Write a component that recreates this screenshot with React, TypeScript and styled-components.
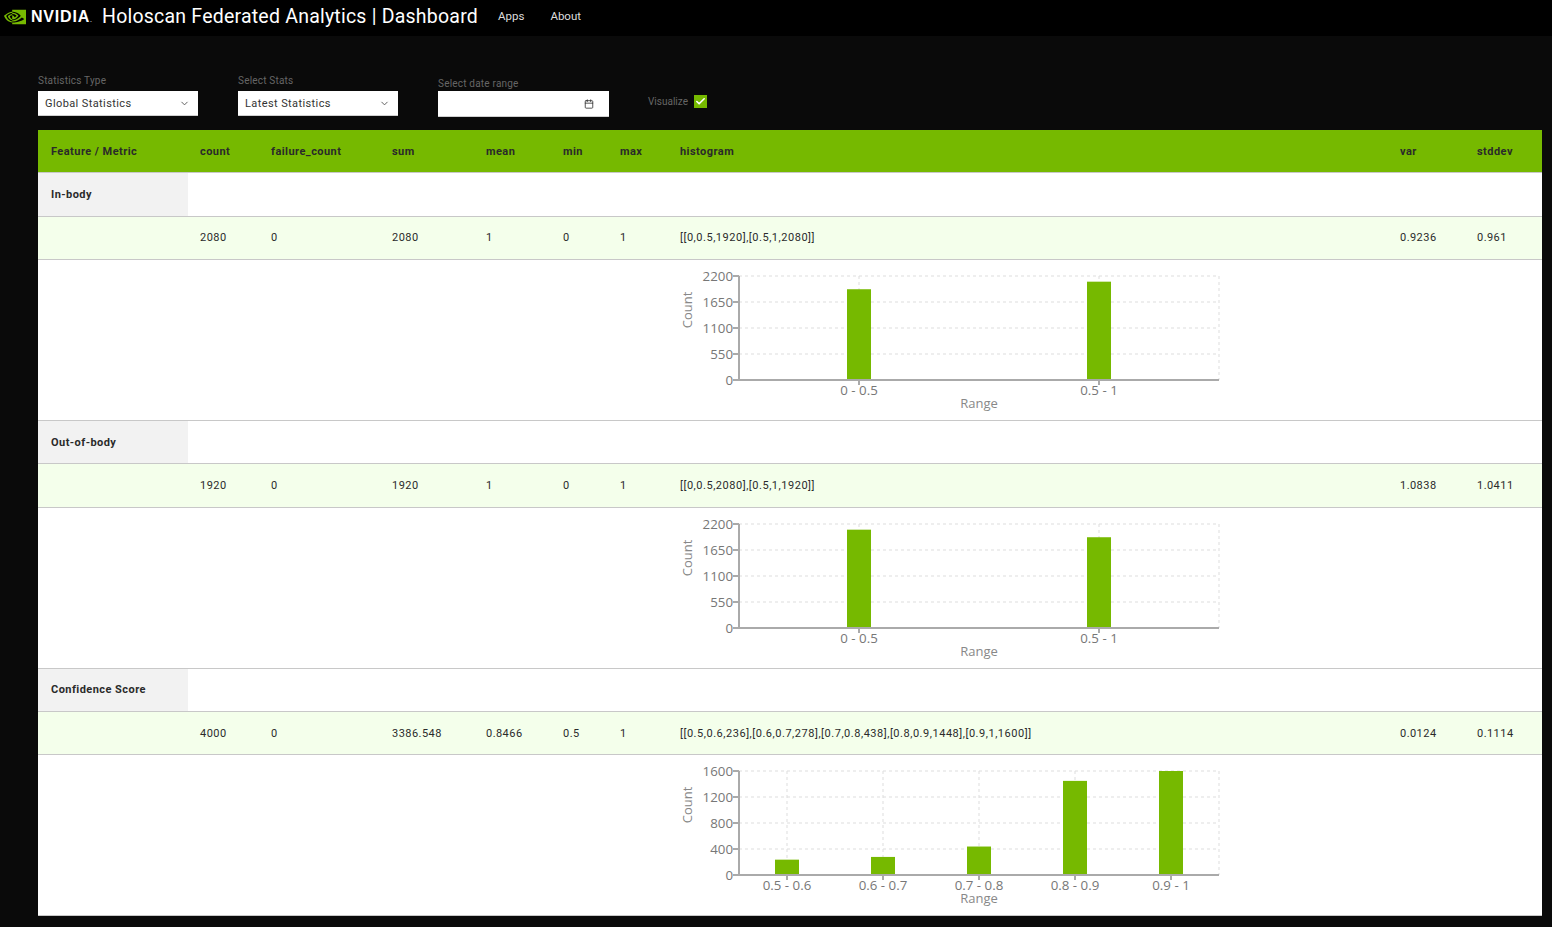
import React from "react";
import styled, { createGlobalStyle } from "styled-components";
import { SiNvidia } from "react-icons/si";
import { Calendar, Check, ChevronDown } from "lucide-react";

const GREEN = "#76b900";
const COLUMNS = "150px 71px 121px 94px 77px 57px 60px 720px 77px 77px";

interface Bin {
  label: string;
  value: number;
}

interface Feature {
  name: string;
  values: string[];
  ticks: number[];
  bins: Bin[];
}

const metrics = ["count", "failure_count", "sum", "mean", "min", "max", "histogram", "var", "stddev"];

const features: Feature[] = [
  {
    name: "In-body",
    values: ["2080", "0", "2080", "1", "0", "1", "[[0,0.5,1920],[0.5,1,2080]]", "0.9236", "0.961"],
    ticks: [0, 550, 1100, 1650, 2200],
    bins: [
      { label: "0 - 0.5", value: 1920 },
      { label: "0.5 - 1", value: 2080 },
    ],
  },
  {
    name: "Out-of-body",
    values: ["1920", "0", "1920", "1", "0", "1", "[[0,0.5,2080],[0.5,1,1920]]", "1.0838", "1.0411"],
    ticks: [0, 550, 1100, 1650, 2200],
    bins: [
      { label: "0 - 0.5", value: 2080 },
      { label: "0.5 - 1", value: 1920 },
    ],
  },
  {
    name: "Confidence Score",
    values: [
      "4000",
      "0",
      "3386.548",
      "0.8466",
      "0.5",
      "1",
      "[[0.5,0.6,236],[0.6,0.7,278],[0.7,0.8,438],[0.8,0.9,1448],[0.9,1,1600]]",
      "0.0124",
      "0.1114",
    ],
    ticks: [0, 400, 800, 1200, 1600],
    bins: [
      { label: "0.5 - 0.6", value: 236 },
      { label: "0.6 - 0.7", value: 278 },
      { label: "0.7 - 0.8", value: 438 },
      { label: "0.8 - 0.9", value: 1448 },
      { label: "0.9 - 1", value: 1600 },
    ],
  },
];

const Histogram = ({ ticks, bins }: { ticks: number[]; bins: Bin[] }) => {
  const left = 71;
  const right = 551;
  const top = 16;
  const bottom = 120;
  const max = ticks[ticks.length - 1];
  const band = (right - left) / bins.length;
  const yOf = (v: number) => bottom - (v / max) * (bottom - top);

  return (
    <ChartSvg width={720} height={160} viewBox="0 0 720 160">
      {ticks.map((t) => (
        <g key={t}>
          {t > 0 && <GridLine x1={left} x2={right} y1={yOf(t)} y2={yOf(t)} />}
          <AxisLine x1={left - 6} x2={left} y1={yOf(t)} y2={yOf(t)} />
          <AxisText x={left - 6} y={yOf(t) + 5} textAnchor="end">
            {t}
          </AxisText>
        </g>
      ))}
      <GridLine x1={right} x2={right} y1={top} y2={bottom} />
      {bins.map((b, i) => {
        const cx = left + band * (i + 0.5);
        return (
          <g key={b.label}>
            <GridLine x1={cx} x2={cx} y1={top} y2={bottom} />
            <rect x={cx - 12} y={yOf(b.value)} width={24} height={bottom - yOf(b.value)} fill={GREEN} />
            <AxisLine x1={cx} x2={cx} y1={bottom} y2={bottom + 5} />
            <AxisText x={cx} y={135} textAnchor="middle">
              {b.label}
            </AxisText>
          </g>
        );
      })}
      <AxisLine x1={left} x2={left} y1={top} y2={bottom} />
      <AxisLine x1={left} x2={right} y1={bottom} y2={bottom} />
      <TitleText x={(left + right) / 2} y={148} textAnchor="middle">
        Range
      </TitleText>
      <TitleText x={0} y={0} textAnchor="middle" transform="translate(24 50) rotate(-90)">
        Count
      </TitleText>
    </ChartSvg>
  );
};

export default function App() {
  return (
    <>
      <GlobalStyle />
      <Header>
        <LogoMark>
          <SiNvidia size={22} color={GREEN} />
          <LogoWord>
            NVIDIA<LogoDot>.</LogoDot>
          </LogoWord>
        </LogoMark>
        <Title>Holoscan Federated Analytics | Dashboard</Title>
        <NavLink>Apps</NavLink>
        <NavLink>About</NavLink>
      </Header>
      <Main>
        <Toolbar>
          <Field $width={160} $height={41} $gap={5}>
            <FieldLabel>Statistics Type</FieldLabel>
            <SelectBox>
              Global Statistics
              <ChevronDown size={11} color="#555" />
            </SelectBox>
          </Field>
          <Field $width={160} $height={41} $gap={5}>
            <FieldLabel>Select Stats</FieldLabel>
            <SelectBox>
              Latest Statistics
              <ChevronDown size={11} color="#555" />
            </SelectBox>
          </Field>
          <Field $width={171} $height={42} $gap={2}>
            <FieldLabel>Select date range</FieldLabel>
            <DateBox>
              <Calendar size={10} color="#333" />
            </DateBox>
          </Field>
          <Visualize>
            <VisualizeLabel>Visualize</VisualizeLabel>
            <CheckBox>
              <Check size={11} color="#fff" strokeWidth={3.5} />
            </CheckBox>
          </Visualize>
        </Toolbar>
        <Table>
          <HeadRow>
            <HeadCell>Feature / Metric</HeadCell>
            {metrics.map((m) => (
              <HeadCell key={m}>{m}</HeadCell>
            ))}
          </HeadRow>
          {features.map((f) => (
            <React.Fragment key={f.name}>
              <NameRow>
                <NameCell>{f.name}</NameCell>
              </NameRow>
              <DataRow>
                <Cell />
                {f.values.map((v, i) => (
                  <Cell key={metrics[i]} $wide={metrics[i] === "histogram"}>
                    {v}
                  </Cell>
                ))}
              </DataRow>
              <ChartRow>
                <ChartCell>
                  <Histogram ticks={f.ticks} bins={f.bins} />
                </ChartCell>
              </ChartRow>
            </React.Fragment>
          ))}
        </Table>
      </Main>
    </>
  );
}

const GlobalStyle = createGlobalStyle`
  html, body {
    margin: 0;
    height: 100%;
    background: #0a0a0a;
    font-family: Roboto, "Liberation Sans", sans-serif;
  }
  body {
    overflow: hidden;
  }
`;

const Header = styled.header`
  display: flex;
  align-items: center;
  height: 36px;
  padding: 0 0 3px 4px;
  background: #000;
  color: #fff;
  box-sizing: border-box;
`;

const LogoMark = styled.div`
  display: flex;
  align-items: center;
  gap: 5px;
  width: 98px;
`;

const LogoWord = styled.span`
  font-family: "Liberation Sans", sans-serif;
  font-size: 16px;
  font-weight: 700;
  letter-spacing: 0.8px;
`;

const LogoDot = styled.span`
  font-size: 7px;
  font-weight: 400;
  letter-spacing: 0;
`;

const Title = styled.h1`
  margin: 0 20px 0 0;
  font-size: 19.5px;
  font-weight: 400;
  letter-spacing: 0.22px;
  white-space: nowrap;
`;

const NavLink = styled.a`
  margin: 0 26px 1px 0;
  font-size: 11.5px;
  color: #ddd;
`;

const Main = styled.main`
  padding: 0 10px 0 38px;
`;

const Toolbar = styled.div`
  display: flex;
  align-items: flex-start;
  gap: 40px;
  height: 94px;
  padding-top: 39px;
  box-sizing: border-box;
`;

const Field = styled.div<{ $width: number; $height: number; $gap: number }>`
  display: flex;
  flex-direction: column;
  justify-content: flex-end;
  gap: ${({ $gap }) => $gap}px;
  width: ${({ $width }) => $width}px;
  height: ${({ $height }) => $height}px;
`;

const FieldLabel = styled.label`
  font-size: 10px;
  line-height: 11px;
  color: #666;
  letter-spacing: 0.2px;
`;

const VisualizeLabel = styled(FieldLabel)`
  letter-spacing: 0;
`;

const SelectBox = styled.div`
  display: flex;
  align-items: center;
  justify-content: space-between;
  height: 25px;
  padding: 0 8px 0 7px;
  background: #fff;
  border-bottom: 1px solid #d0d0d0;
  font-size: 11px;
  color: #333;
  letter-spacing: 0.4px;
  box-sizing: border-box;
`;

const DateBox = styled(SelectBox)`
  justify-content: flex-end;
  height: 26px;
  padding-right: 15px;
`;

const Visualize = styled.div`
  display: flex;
  align-items: center;
  gap: 6px;
  height: 26px;
  margin: 13px 0 0 -1px;
`;

const CheckBox = styled.span`
  display: flex;
  align-items: center;
  justify-content: center;
  width: 13px;
  height: 13px;
  background: ${GREEN};
`;

const Table = styled.div`
  width: 1504px;
  background: #fff;
`;

const Row = styled.div`
  display: grid;
  grid-template-columns: ${COLUMNS};
  border-bottom: 1px solid #c8c8c8;
  box-sizing: border-box;
`;

const HeadRow = styled(Row)`
  height: 43.2px;
  background: ${GREEN};
`;

const HeadCell = styled.div`
  display: flex;
  align-items: center;
  padding-left: 12px;
  font-size: 11px;
  font-weight: 700;
  color: #2a2a2a;
  letter-spacing: 0.45px;
  white-space: nowrap;

  &:first-child {
    padding-left: 13px;
  }
`;

const NameRow = styled(Row)`
  height: 43.5px;
`;

const NameCell = styled.div`
  display: flex;
  align-items: center;
  padding-left: 13px;
  background: #f2f2f2;
  font-size: 11px;
  font-weight: 700;
  color: #2a2a2a;
  letter-spacing: 0.45px;
  white-space: nowrap;
`;

const DataRow = styled(Row)`
  height: 43.33px;
  background: #f4ffeb;
`;

const Cell = styled.div<{ $wide?: boolean }>`
  display: flex;
  align-items: center;
  padding-left: 12px;
  font-size: 11px;
  color: #2b2b2b;
  letter-spacing: ${({ $wide }) => ($wide ? "0.53px" : "0.45px")};
  white-space: nowrap;
`;

const ChartRow = styled(Row)`
  height: 160.83px;
`;

const ChartCell = styled.div`
  grid-column: 8;
`;

const ChartSvg = styled.svg`
  display: block;
`;

const GridLine = styled.line`
  stroke: #ddd;
  stroke-dasharray: 3 3;
`;

const AxisLine = styled.line`
  stroke: #aaa;
  stroke-width: 2;
`;

const AxisText = styled.text`
  font-family: "Open Sans", sans-serif;
  font-size: 13.3px;
  fill: #777;
`;

const TitleText = styled(AxisText)`
  font-size: 13px;
  fill: #888;
`;
